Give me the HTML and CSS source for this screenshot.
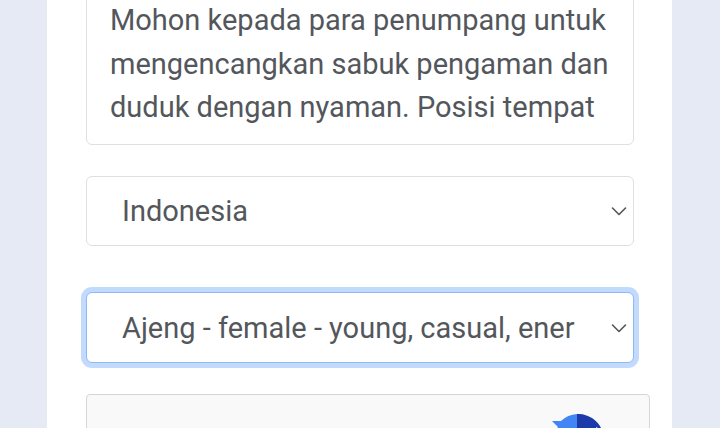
FILE: index.html
```html
<!DOCTYPE html>
<html lang="en">

<head>
    <meta charset="UTF-8">
    <meta name="viewport" content="width=device-width, initial-scale=1.0">
    <title>Pengumuman Suara</title>
    <link rel="stylesheet" href="styles.css">
</head>

<body>
    <div class="card">
        <textarea class="form-control" rows="3">Mohon kepada para penumpang untuk mengencangkan sabuk pengaman dan duduk dengan nyaman. Posisi tempat</textarea>

        <select class="form-select lang">
            <option>Indonesia</option>
            <option>English</option>
        </select>

        <select class="form-select voice focused">
            <option>Ajeng - female - young, casual, energetic</option>
            <option>Bima - male - adult, calm</option>
        </select>

        <div class="captcha">
            <svg class="captcha-logo" width="52" height="52" viewBox="0 0 52 52">
                <!-- top part of the recaptcha arrow logo -->
                <path d="M25 0 A26 26 0 0 1 50 16 L44 13 L46 26 L25 26 Z" fill="#1c3aa9" />
                <path d="M25 0 L25 26 L8 26 L2 19 L6 13 L0 7 L9 7 A26 26 0 0 1 25 0 Z" fill="#4285f4" />
            </svg>
        </div>
    </div>
</body>

</html>
```

FILE: styles.css
```css
body {
    margin: 0;
    background-color: #e6eaf5;
    font-family: Roboto, "Noto Sans", sans-serif;
    overflow: hidden;
}

.card {
    width: 547px;
    min-height: 100vh;
    margin-left: 47px;
    padding: 0 39px;
    background-color: #fff;
}

.form-control {
    display: block;
    box-sizing: border-box;
    width: 548px;
    height: 171px;
    margin: -26px 0 0 0;
    padding: 24px 16px 0 23px;
    font-family: inherit;
    font-size: 29px;
    line-height: 43.5px;
    color: #53575c;
    border: 1px solid #dcdfe3;
    border-radius: 6px;
    resize: none;
    overflow: hidden;
}

.form-select {
    display: block;
    box-sizing: border-box;
    width: 548px;
    height: 70px;
    padding: 0 58px 0 35px;
    font-family: inherit;
    font-size: 29px;
    color: #53575c;
    background-color: #fff;
    background-image: url("data:image/svg+xml,%3csvg xmlns='http://www.w3.org/2000/svg' viewBox='0 0 16 10'%3e%3cpath fill='none' stroke='%23555' stroke-linecap='round' stroke-linejoin='round' stroke-width='1.6' d='M1.5 2l6.5 6.5 6.5-6.5'/%3e%3c/svg%3e");
    background-repeat: no-repeat;
    background-position: right 6px center;
    background-size: 16px 10px;
    border: 1px solid #dcdfe3;
    border-radius: 6px;
    appearance: none;
    -webkit-appearance: none;
    outline: none;
}

.lang {
    margin-top: 31px;
}

.voice {
    margin-top: 46px;
    height: 71px;
}

.focused {
    border-color: #8dbaf7;
    box-shadow: 0 0 0 5px #c2dafb;
}

.captcha {
    position: relative;
    box-sizing: border-box;
    width: 564px;
    height: 80px;
    margin-top: 31px;
    background-color: #f9f9f9;
    border: 1px solid #d6d6d6;
    border-radius: 4px;
}

.captcha-logo {
    position: absolute;
    left: 465px;
    top: 19px;
}
```
